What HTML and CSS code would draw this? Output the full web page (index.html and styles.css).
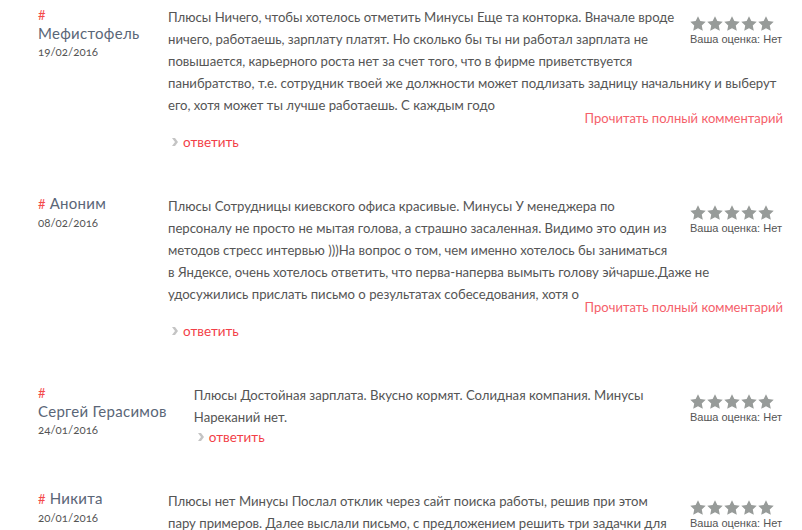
FILE: index.html
```html
<!DOCTYPE html>
<html lang="ru">
<head>
<meta charset="utf-8">
<title>Отзывы</title>
<link rel="stylesheet" href="styles.css">
</head>
<body>
<svg width="0" height="0" class="defs" aria-hidden="true">
  <defs>
    <symbol id="star" viewBox="1 0.6 22 21.2">
      <path d="M12 0.8l3.3 7 7.6 0.9-5.6 5.3 1.5 7.6L12 17.8l-6.8 3.8 1.5-7.6L1.1 8.7l7.6-0.9z"/>
    </symbol>
    <symbol id="arr" viewBox="0 0 6 8">
      <path d="M0 0h3l3 4-3 4H0l3-4z"/>
    </symbol>
  </defs>
</svg>

<div class="comments">

  <div class="comment">
    <div class="author">
      <a class="hash">#</a> <span class="name">Мефистофель</span>
      <div class="date">19/02/2016</div>
    </div>
    <div class="body">
      <div class="rating">
        <div class="stars"><svg><use href="#star"/></svg><svg><use href="#star"/></svg><svg><use href="#star"/></svg><svg><use href="#star"/></svg><svg><use href="#star"/></svg></div>
        <div class="rating-label">Ваша оценка: Нет</div>
      </div>
      <p class="text">Плюсы Ничего, чтобы хотелось отметить Минусы Еще та конторка. Вначале вроде ничего, работаешь, зарплату платят. Но сколько бы ты ни работал зарплата не повышается, карьерного роста нет за счет того, что в фирме приветствуется панибратство, т.е. сотрудник твоей же должности может подлизать задницу начальнику и выберут его, хотя может ты лучше работаешь. С каждым годо</p>
      <div class="more"><a>Прочитать полный комментарий</a></div>
      <div class="reply"><svg class="arr"><use href="#arr"/></svg><a>ответить</a></div>
    </div>
  </div>

  <div class="comment">
    <div class="author">
      <a class="hash">#</a> <span class="name">Аноним</span>
      <div class="date">08/02/2016</div>
    </div>
    <div class="body">
      <div class="rating">
        <div class="stars"><svg><use href="#star"/></svg><svg><use href="#star"/></svg><svg><use href="#star"/></svg><svg><use href="#star"/></svg><svg><use href="#star"/></svg></div>
        <div class="rating-label">Ваша оценка: Нет</div>
      </div>
      <p class="text">Плюсы Сотрудницы киевского офиса красивые. Минусы У менеджера по персоналу не просто не мытая голова, а страшно засаленная. Видимо это один из методов стресс интервью )))На вопрос о том, чем именно хотелось бы заниматься в&nbsp;Яндексе, очень хотелось ответить, что перва-наперва вымыть голову эйчарше.Даже не удосужились прислать письмо о результатах собеседования, хотя о</p>
      <div class="more"><a>Прочитать полный комментарий</a></div>
      <div class="reply"><svg class="arr"><use href="#arr"/></svg><a>ответить</a></div>
    </div>
  </div>

  <div class="comment">
    <div class="author">
      <a class="hash">#</a> <span class="name">Сергей Герасимов</span>
      <div class="date">24/01/2016</div>
    </div>
    <div class="body">
      <div class="rating">
        <div class="stars"><svg><use href="#star"/></svg><svg><use href="#star"/></svg><svg><use href="#star"/></svg><svg><use href="#star"/></svg><svg><use href="#star"/></svg></div>
        <div class="rating-label">Ваша оценка: Нет</div>
      </div>
      <p class="text">Плюсы Достойная зарплата. Вкусно кормят. Солидная компания. Минусы Нареканий нет.</p>
      <div class="reply"><svg class="arr"><use href="#arr"/></svg><a>ответить</a></div>
    </div>
  </div>

  <div class="comment">
    <div class="author">
      <a class="hash">#</a> <span class="name">Никита</span>
      <div class="date">20/01/2016</div>
    </div>
    <div class="body">
      <div class="rating">
        <div class="stars"><svg><use href="#star"/></svg><svg><use href="#star"/></svg><svg><use href="#star"/></svg><svg><use href="#star"/></svg><svg><use href="#star"/></svg></div>
        <div class="rating-label">Ваша оценка: Нет</div>
      </div>
      <p class="text">Плюсы нет Минусы Послал отклик через сайт поиска работы, решив при этом пару примеров. Далее выслали письмо, с предложением решить три задачки для самостоятельной работы, что я и сделал в срок.</p>
      <div class="more"><a>Прочитать полный комментарий</a></div>
      <div class="reply"><svg class="arr"><use href="#arr"/></svg><a>ответить</a></div>
    </div>
  </div>

</div>
</body>
</html>
```
FILE: styles.css
```css
html, body {
  margin: 0;
  background: #fff;
}
body {
  font-family: Lato, "Open Sans", "DejaVu Sans", sans-serif;
  color: #555;
  overflow: hidden;
}
.defs {
  position: absolute;
  width: 0;
  height: 0;
}
.comments {
  padding: 6px 19px 0 38px;
}
.comment {
  display: flex;
  align-items: flex-start;
  margin-bottom: 44px;
}
.author {
  flex: none;
  width: min-content;
  min-width: 103px;
  margin-right: 27px;
  margin-top: -1px;
  line-height: 18px;
}
.hash {
  color: #f44a4a;
  font-size: 13px;
}
.name {
  white-space: nowrap;
  font-size: 15px;
  letter-spacing: 0.3px;
  color: #5a6677;
}
.date {
  font-size: 11.5px;
  line-height: 14px;
  margin-top: 3px;
  color: #555;
  font-variant-numeric: oldstyle-nums;
  white-space: nowrap;
}
.body {
  flex: 1;
  min-width: 0;
  display: flow-root;
}
.rating {
  float: right;
  width: 93px;
  margin: 9px 0 12px 11px;
}
.stars {
  display: flex;
  gap: 1px;
  height: 16px;
  align-items: center;
}
.stars svg {
  width: 16px;
  height: 15px;
  fill: #979b99;
}
.rating-label {
  font-family: "Liberation Sans", Arial, sans-serif;
  font-size: 11px;
  line-height: 14px;
  margin-top: 1px;
  color: #555;
  white-space: nowrap;
}
.text {
  margin: 0;
  font-size: 13.15px;
  line-height: 22px;
  color: #555;
}
.more {
  text-align: right;
  font-size: 13px;
  line-height: 18px;
  margin-top: -7px;
  margin-bottom: 6px;
  color: #f5606a;
}
.reply {
  display: flex;
  align-items: center;
  gap: 5px;
  padding-left: 4px;
  font-size: 13.5px;
  line-height: 18px;
  color: #f23f48;
}
.arr {
  width: 6px;
  height: 8px;
  fill: #c4c4c4;
}
```
